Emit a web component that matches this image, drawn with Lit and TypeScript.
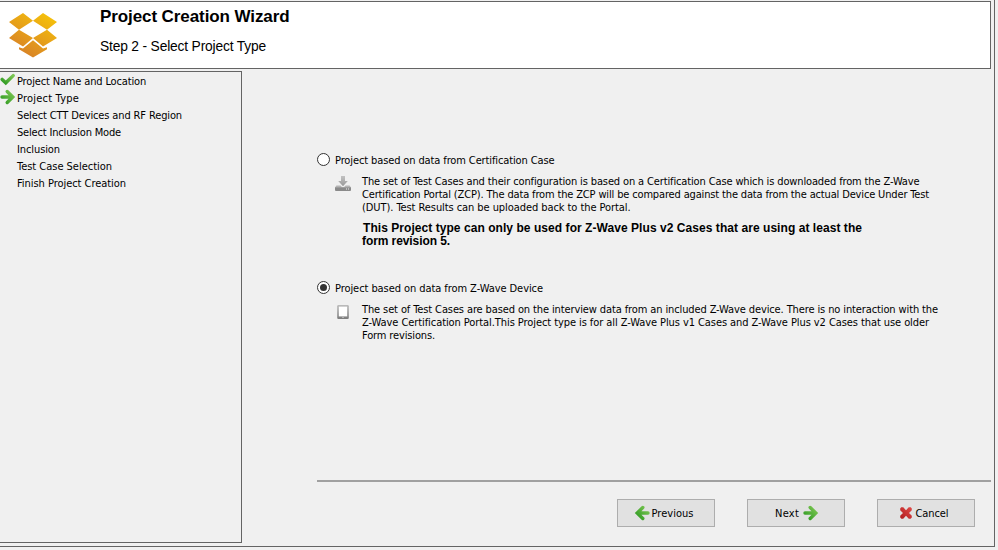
import { LitElement, html, css, svg } from "lit";
import { customElement, property } from "lit/decorators.js";

/** One line of text, spaced out to an exact measure. */
@customElement("fit-line")
class FitLine extends LitElement {
  @property({ type: Number }) measure = 0;
  @property() text = "";

  static styles = css`
    :host { display: block; }
    .line { display: inline-block; white-space: pre; vertical-align: top; }
  `;

  firstUpdated() {
    const line = this.renderRoot.querySelector(".line") as HTMLElement;
    const spare = this.measure - line.getBoundingClientRect().width;
    line.style.letterSpacing = `${spare / this.text.length}px`;
  }

  render() {
    return html`<span class="line">${this.text}</span>`;
  }
}

const line = (text: string, measure: number) =>
  html`<fit-line .text=${text} .measure=${measure}></fit-line>`;

const green = (id: string) => svg`<defs><linearGradient id=${id} x1="1" y1="0" x2="0" y2="1">
  <stop offset="0" stop-color="#7cc653"/><stop offset="1" stop-color="#2f9a22"/></linearGradient></defs>`;
const arrowPath = "M2 8 H11 M7.2 2.5 L12.8 8 L7.2 13.5";

const rightArrow = html`<svg class="icon" width="16" height="16" viewBox="0 0 16 16">${green("r")}<path fill="none" stroke="url(#r)" stroke-width="3.4" stroke-linecap="round" d=${arrowPath}/></svg>`;
const leftArrow = html`<svg class="icon" width="16" height="16" viewBox="0 0 16 16">${green("l")}<path fill="none" stroke="url(#l)" stroke-width="3.4" stroke-linecap="round" d="M14 8 H5 M8.8 2.5 L3.2 8 L8.8 13.5"/></svg>`;
const check = html`<svg class="icon" width="16" height="16" viewBox="0 0 16 16">${green("c")}<path fill="none" stroke="url(#c)" stroke-width="3.4" stroke-linecap="round" d="M2.2 7.4 L5.8 10.8 L13.2 3.6"/></svg>`;
const cross = html`<svg class="icon" width="14" height="14" viewBox="0 0 14 14">
  <defs><linearGradient id="x" x1="1" y1="0" x2="0" y2="1"><stop offset="0" stop-color="#e04a48"/><stop offset="1" stop-color="#b01c1e"/></linearGradient></defs>
  <path fill="url(#x)" d="M2.2 1.3 H4.3 L7 4.3 L9.7 1.3 H11.8 L12.8 2.4 V4.2 L10 7 L12.8 9.8 V11.4 L11.6 12.7 H9.8 L7 9.7 L4.2 12.7 H2.4 L1.2 11.4 V9.8 L4 7 L1.2 4.2 V2.4Z"/></svg>`;
const download = html`<svg class="icon" width="16" height="16" viewBox="0 0 16 16">
  <defs><linearGradient id="t" x2="0" y2="1"><stop offset="0" stop-color="#c2c2c2"/><stop offset="1" stop-color="#999"/></linearGradient></defs>
  <path fill="url(#t)" d="M6 0 H10 V5 H12.8 L8 10.2 L3.2 5 H6Z"/>
  <path fill="#b4b4b4" d="M1.4 9.4 H5.4 L8 12 L10.6 9.4 H14.6 L16 11.4 H0Z"/>
  <path fill="#8a8a8a" d="M0 11.2 H16 V14 Q16 15 15 15 H1 Q0 15 0 14Z"/>
  <path fill="#eee" d="M11 12.5 H12 V13.5 H11Z M13 12.5 H14 V13.5 H13Z"/></svg>`;
const device = html`<svg class="icon" width="16" height="16" viewBox="0 0 16 16">
  <defs><linearGradient id="d" x2="0" y2="1"><stop offset="0" stop-color="#bcbcbc"/><stop offset="1" stop-color="#7c7c7c"/></linearGradient></defs>
  <rect x="2.2" y="1" width="11.6" height="14" rx="1.2" fill="url(#d)"/><path fill="#fff" d="M3.8 2.6 H12.2 V12.4 H3.8Z"/><path fill="#ddd" d="M7.3 13.2 H8.7 V14 H7.3Z"/></svg>`;
const logo = html`<svg class="logo" width="48" height="45" viewBox="0 0 48 45">
  <defs><linearGradient id="g" gradientUnits="userSpaceOnUse" x1="39" y1="0" x2="14" y2="40"><stop offset="0" stop-color="#f6c20a"/><stop offset="1" stop-color="#d98426"/></linearGradient></defs>
  <path fill="url(#g)" d="M0 9 L14 0 L24 7.8 L10 16.7Z M24 7.8 L34 0 L48 9 L38 16.7Z M0 25 L10 16.7 L24 25 L14 33.5Z M24 25 L38 16.7 L48 25 L34 33.5Z M10 34.2 L14 35.5 L24 27.3 L34 35.5 L38 34.2 V36.2 L24 44.6 L10 36.2Z"/></svg>`;

@customElement("app-root")
class AppRoot extends LitElement {
  static styles = css`
    :host { display: block; }
    * { box-sizing: border-box; }
    .page { width: 998px; height: 550px; background: #f0f0f0; overflow: hidden;
      font: 11px/13px "DejaVu Sans Condensed", "Noto Sans", sans-serif; color: #000; }
    .frame { width: 995px; height: 547px; border: solid #646464; border-width: 0 1px 1px 0; padding-top: 1px; }
    .header { display: flex; width: 991px; height: 68px; border: 1px solid #646464; border-left: 0;
      background: #fff; font-family: "Liberation Sans", sans-serif; }
    .logo { margin: 11px 43px 0 9px; flex: none; display: block; }
    .title { font-size: 17px; line-height: 20px; font-weight: bold; margin-top: 5px; }
    .step { font-size: 13.8px; line-height: 18px; margin-top: 11px; }
    .body { display: flex; padding-top: 2px; }
    .steps { width: 242px; height: 472px; border: solid #646464; border-width: 1px 1px 1px 0; }
    .row { display: flex; align-items: center; height: 17px; }
    .row fit-line { padding-top: 2px; }
    .mark { width: 17px; height: 16px; flex: none; margin-bottom: 1px; }
    .icon { display: block; flex: none; }
    .main { margin-left: 75px; width: 674px; display: flex; flex-direction: column; }
    .option { display: flex; align-items: center; height: 13px; gap: 5px; }
    .option.upper { margin-top: 82px; }
    .option.lower { margin-top: 33px; }
    .option fit-line { padding-top: 2px; }
    .radio { width: 13px; height: 13px; border: 1px solid #333; border-radius: 50%; background: #fff;
      display: flex; align-items: center; justify-content: center; flex: none; }
    .dot { width: 7px; height: 7px; border-radius: 50%; background: #333; }
    .detail { display: flex; padding-left: 18px; margin-top: 9px; gap: 11px; }
    .detail .icon { margin-top: 1px; }
    .strong { font: bold 12px/13px "Liberation Sans", sans-serif; margin-top: 8px; }
    .first { margin-left: 1px; }
    .rule { height: 2px; background: #a0a0a0; margin-top: 138px; }
    .buttons { display: flex; justify-content: flex-end; gap: 32px; margin-top: 17px; padding-right: 16px; }
    .button { width: 98px; height: 28px; border: 1px solid #adadad; background: #e1e1e1;
      display: flex; align-items: center; justify-content: center; font: inherit; color: #000; padding: 0 5px 0 0; gap: 2px; }
    .next { gap: 4px; padding: 0 0 0 2px; }
    .cancel { gap: 3px; }
  `;

  render() {
    const steps: [string, number, unknown][] = [
      ["Project Name and Location", 129, check],
      ["Project Type", 62, rightArrow],
      ["Select CTT Devices and RF Region", 165, ""],
      ["Select Inclusion Mode", 104, ""],
      ["Inclusion", 43, ""],
      ["Test Case Selection", 95, ""],
      ["Finish Project Creation", 109, ""],
    ];
    return html`<div class="page"><div class="frame">
      <div class="header">${logo}
        <div><div class="title">${line("Project Creation Wizard", 189.5)}</div>
        <div class="step">${line("Step 2 - Select Project Type", 166)}</div></div>
      </div>
      <div class="body">
        <div class="steps">${steps.map(([t, w, i]) => html`<div class="row"><div class="mark">${i}</div>${line(t, w)}</div>`)}</div>
        <div class="main">
          <div class="option upper"><div class="radio"></div>${line("Project based on data from Certification Case", 219.5)}</div>
          <div class="detail">${download}<div>
            ${line("The set of Test Cases and their configuration is based on a Certification Case which is downloaded from the Z-Wave", 557.5)}
            ${line("Certification Portal (ZCP). The data from the ZCP will be compared against the data from the actual Device Under Test", 567)}
            ${line("(DUT). Test Results can be uploaded back to the Portal.", 268.5)}
            <div class="strong"><div class="first">${line("This Project type can only be used for Z-Wave Plus v2 Cases that are using at least the", 499)}</div>
            ${line("form revision 5.", 88)}</div>
          </div></div>
          <div class="option lower"><div class="radio"><div class="dot"></div></div>${line("Project based on data from Z-Wave Device", 208)}</div>
          <div class="detail">${device}<div>
            ${line("The set of Test Cases are based on the interview data from an included Z-Wave device. There is no interaction with the", 576)}
            ${line("Z-Wave Certification Portal.This Project type is for all Z-Wave Plus v1 Cases and Z-Wave Plus v2 Cases that use older", 567)}
            ${line("Form revisions.", 73)}
          </div></div>
          <div class="rule"></div>
          <div class="buttons">
            <button class="button">${leftArrow}${line("Previous", 42)}</button>
            <button class="button next">${line("Next", 24)}${rightArrow}</button>
            <button class="button cancel">${cross}${line("Cancel", 33)}</button>
          </div>
        </div>
      </div>
    </div></div>`;
  }
}
